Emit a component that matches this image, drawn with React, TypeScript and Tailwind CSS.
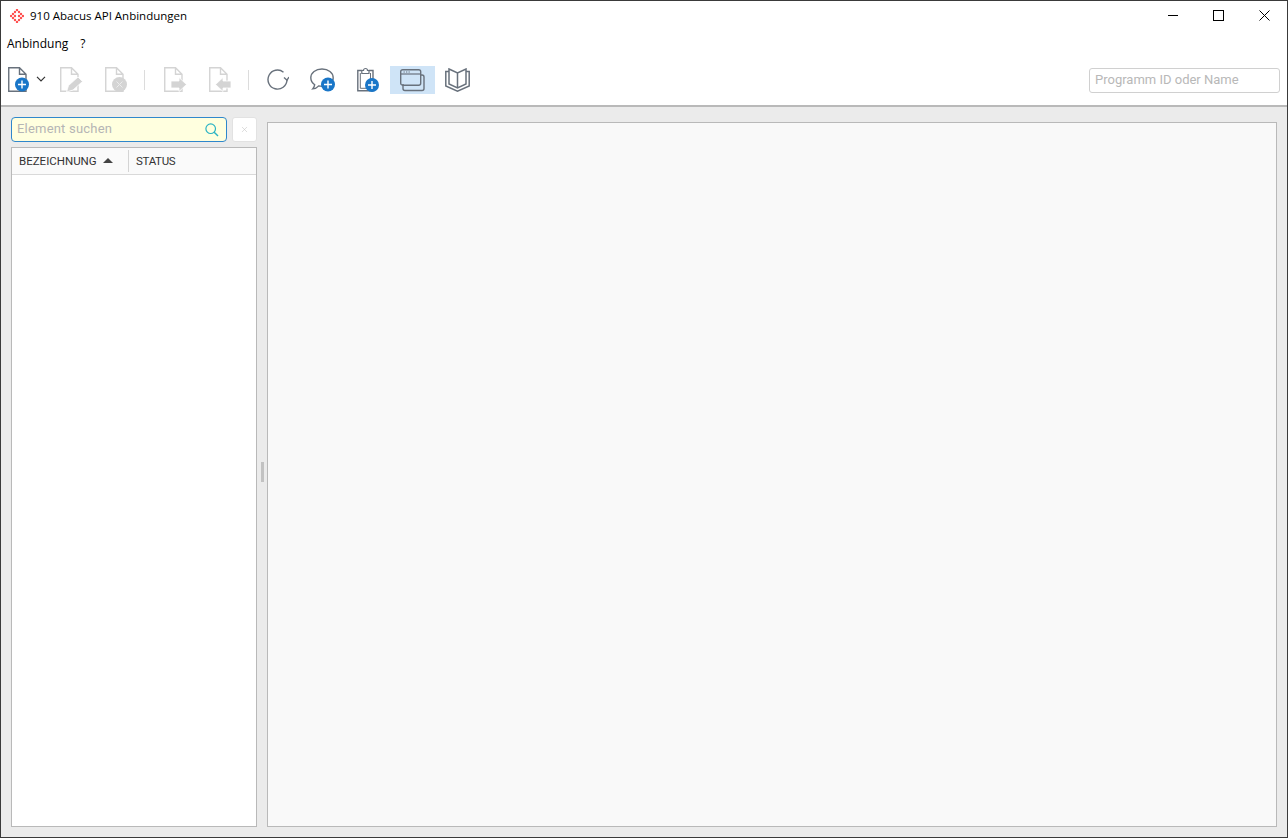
import { X } from 'lucide-react';

const BLUE = '#1976c8';
const SLATE = '#68717c';
const OFF = '#d4d4d4';

function PlusBadge({ cx, cy }: { cx: number; cy: number }) {
  return (
    <g>
      <circle cx={cx} cy={cy} r="7" fill={BLUE} />
      <path d={`M${cx - 4} ${cy}H${cx + 4}M${cx} ${cy - 4}V${cy + 4}`} stroke="#fff" strokeWidth="1.4" />
    </g>
  );
}

function Page({ color }: { color: string }) {
  return <path d="M.75.75H11.5L18 7.25V24.25H.75ZM11.5.75V7.25H18" fill="#fff" stroke={color} strokeWidth="1.4" />;
}

function NewIcon() {
  return (
    <svg width="22" height="26" viewBox="0 0 22 26" className="block">
      <Page color={SLATE} />
      <PlusBadge cx={14} cy={17.5} />
    </svg>
  );
}

function EditIcon() {
  return (
    <svg width="23" height="26" viewBox="0 0 23 26" className="block">
      <Page color={OFF} />
      <path d="M6.5 25 8.5 18.5 18 10 22.5 14.5 13 23Z" fill={OFF} stroke="#fff" strokeWidth=".8" />
    </svg>
  );
}

function DeleteIcon() {
  return (
    <svg width="23" height="26" viewBox="0 0 23 26" className="block">
      <Page color={OFF} />
      <circle cx="14.5" cy="17.5" r="7.5" fill={OFF} />
      <path d="M11.5 14.5 17.5 20.5M17.5 14.5 11.5 20.5" stroke="#ececec" strokeWidth="1" />
    </svg>
  );
}

function ExportIcon() {
  return (
    <svg width="23" height="26" viewBox="0 0 23 26" className="block">
      <Page color={OFF} />
      <path d="M7 14H15V10.5L22.5 17.5 15 24.5V21H7Z" fill={OFF} stroke="#fff" strokeWidth=".8" />
    </svg>
  );
}

function ImportIcon() {
  return (
    <svg width="23" height="26" viewBox="0 0 23 26" className="block">
      <Page color={OFF} />
      <path d="M22 14H14V10.5L6.5 17.5 14 24.5V21H22Z" fill={OFF} stroke="#fff" strokeWidth=".8" />
    </svg>
  );
}

function RefreshIcon() {
  return (
    <svg width="22" height="22" viewBox="0 0 22 22" className="block">
      <path d="M16.5 3.2A9.5 9.5 0 1 0 20 11" fill="none" stroke={SLATE} strokeWidth="1.4" />
      <path d="M17 8.5 20 11.2 22 8" fill="none" stroke={SLATE} strokeWidth="1.4" />
    </svg>
  );
}

function ChatIcon() {
  return (
    <svg width="26" height="24" viewBox="0 0 26 24" className="block">
      <path
        d="M12 1C5.7 1 .8 4.7.8 9.8c0 3 1.6 5.3 3.9 6.9-.2 1.6-1 3-2 4.2 2.6-.2 4.6-1.3 6-3 1 .2 2.1.3 3.3.3 6.3 0 11.2-3.6 11.2-8.3C23.2 4.7 18.3 1 12 1Z"
        fill="#fff"
        stroke={SLATE}
        strokeWidth="1.4"
      />
      <PlusBadge cx={18} cy={16.5} />
    </svg>
  );
}

function ClipboardIcon() {
  return (
    <svg width="23" height="26" viewBox="0 0 23 26" className="block">
      <path d="M5.5 3.5H.8V23.7H16V3.5H11.5" fill="#fff" stroke={SLATE} strokeWidth="1.4" />
      <path d="M3.3 6V21.3H13.5V6" fill="none" stroke={SLATE} strokeWidth="1" />
      <path d="M4.8 6.5V3.5H6.5A2 2 0 0 1 10.5 3.5H12V6.5Z" fill="#fff" stroke={SLATE} strokeWidth="1.2" />
      <PlusBadge cx={15} cy={18} />
    </svg>
  );
}

function WindowsIcon() {
  return (
    <svg width="26" height="23" viewBox="0 0 26 23" className="block">
      <path d="M3 15V19.5A2 2 0 0 0 5 21.5H22A2 2 0 0 0 24 19.5V8A2 2 0 0 0 22 6H20" fill="none" stroke={SLATE} strokeWidth="1.4" />
      <rect x=".7" y=".7" width="20" height="15.5" rx="2" fill="none" stroke={SLATE} strokeWidth="1.4" />
      <path d="M1 5H20.5" stroke={SLATE} strokeWidth="1.2" />
      <path d="M3.5 3H4.8M6 3H7.3M8.5 3H9.8" stroke={SLATE} strokeWidth="1.2" />
    </svg>
  );
}

function BookIcon() {
  return (
    <svg width="25" height="24" viewBox="0 0 25 24" className="block">
      <path d="M4 1 12.5 5 21 1V16L12.5 20 4 16ZM12.5 5V20" fill="none" stroke={SLATE} strokeWidth="1.5" />
      <path d="M4 3.5H.8V18L12.5 23.2 24.2 18V3.5H21" fill="none" stroke={SLATE} strokeWidth="1.5" />
    </svg>
  );
}

function SearchGlass() {
  return (
    <svg width="14" height="14" viewBox="0 0 14 14" className="block">
      <circle cx="5.7" cy="5.7" r="4.8" fill="none" stroke="#2bb3c4" strokeWidth="1.2" />
      <path d="M9.2 9.2 13 13" stroke="#2bb3c4" strokeWidth="1.4" />
    </svg>
  );
}

function Logo() {
  // rotated lattice of dots, open in the middle
  const dots = [
    [7, 1], [5, 3], [9, 3], [3, 5], [11, 5],
    [1, 7], [5, 7], [9, 7], [13, 7], [3, 9], [11, 9],
    [5, 11], [9, 11], [7, 13],
  ];
  return (
    <svg width="14" height="14" viewBox="0 0 14 14" className="block">
      {dots.map(([x, y]) => (
        <circle key={`${x}-${y}`} cx={x} cy={y} r="1.2" fill="#ff4d4d" />
      ))}
    </svg>
  );
}

function Divider() {
  return <div className="h-[20px] w-px bg-[#dcdcdc]" />;
}

export default function App() {
  return (
    <div className="flex h-[838px] w-[1288px] flex-col overflow-hidden border border-[#3a3a3a] bg-white font-['Roboto',sans-serif]">
      {/* title bar */}
      <div className="flex h-[29px] shrink-0 items-center pl-[9px] font-['Open_Sans','Noto_Sans',sans-serif] text-[11.5px] text-black">
        <Logo />
        <span className="ml-[6px]">910 Abacus API Anbindungen</span>
        <div className="ml-auto flex items-center pr-[17px]">
          <div className="h-px w-[10px] bg-black" />
          <div className="ml-[35px] h-[11px] w-[11px] border border-black" />
          <svg width="11" height="11" viewBox="0 0 11 11" className="ml-[35px] block">
            <path d="M.5.5 10.5 10.5M10.5.5.5 10.5" stroke="#000" strokeWidth="1" />
          </svg>
        </div>
      </div>

      {/* menu */}
      <div className="flex h-[27px] shrink-0 items-center pl-[6px] font-['Open_Sans','Noto_Sans',sans-serif] text-[12px] text-black">
        <span>Anbindung</span>
        <span className="ml-[12px]">?</span>
      </div>

      {/* toolbar */}
      <div className="flex h-[50px] shrink-0 items-center border-b-2 border-[#b9b9b9] pb-[2px] pl-[7px] pr-[7px]">
        <NewIcon />
        <svg width="10" height="6" viewBox="0 0 10 6" className="ml-[6px] mb-[2px]">
          <path d="M1 .8 5 4.8 9 .8" fill="none" stroke="#333" strokeWidth="1.2" />
        </svg>
        <div className="ml-[14px]"><EditIcon /></div>
        <div className="ml-[22px]"><DeleteIcon /></div>
        <div className="ml-[16px]"><Divider /></div>
        <div className="ml-[19px]"><ExportIcon /></div>
        <div className="ml-[22px]"><ImportIcon /></div>
        <div className="ml-[16px]"><Divider /></div>
        <div className="ml-[18px]"><RefreshIcon /></div>
        <div className="ml-[21px]"><ChatIcon /></div>
        <div className="ml-[21px]"><ClipboardIcon /></div>
        <div className="ml-[10px] flex h-[28px] w-[45px] items-center justify-center bg-[#cfe4f7]"><WindowsIcon /></div>
        <div className="ml-[10px]"><BookIcon /></div>
        <div className="ml-auto flex h-[25px] w-[191px] items-center rounded-[3px] border border-[#d0d0d0] pl-[5px] text-[13px] text-[#b8b8b8]">
          Programm ID oder Name
        </div>
      </div>

      {/* content */}
      <div className="flex min-h-0 flex-1 bg-[#ebebeb] pb-[10px] pl-[10px] pr-[10px]">
        <div className="flex w-[246px] shrink-0 flex-col pt-[10px]">
          <div className="flex h-[25px] shrink-0 items-center">
            <div className="flex h-[25px] w-[216px] items-center justify-between rounded-[4px] border border-[#2f87cc] bg-[#ffffdf] pl-[5px] pr-[7px] text-[13px] tracking-[0.2px] text-[#b5b5b5]">
              <span className="mb-[2px]">Element suchen</span>
              <SearchGlass />
            </div>
            <div className="ml-[5px] flex h-[25px] w-[25px] items-center justify-center rounded-[3px] border border-[#e2e2e2] bg-white">
              <X size={9} strokeWidth={1.5} className="text-[#c4c4c4]" />
            </div>
          </div>
          <div className="mt-[5px] flex min-h-0 flex-1 flex-col border border-[#b9b9b9] bg-white">
            <div className="flex h-[27px] shrink-0 items-center border-b border-[#d9d9d9] bg-[#fafafa] text-[11.5px] text-[#333]">
              <div className="flex h-[22px] w-[117px] items-center border-r border-[#d4d4d4] pl-[7px]">
                <span className="mt-[2px]">BEZEICHNUNG</span>
                <span className="ml-[6px] mb-[2px] h-0 w-0 border-x-[5px] border-b-[5px] border-x-transparent border-b-[#444]" />
              </div>
              <span className="mt-[2px] pl-[7px] tracking-[-0.3px]">STATUS</span>
            </div>
          </div>
        </div>

        {/* splitter */}
        <div className="flex w-[10px] shrink-0 items-center justify-center">
          <div className="mt-[10px] h-[20px] w-[3px] bg-[#c2c2c2]" />
        </div>

        <div className="mt-[15px] min-w-0 flex-1 border border-[#b9b9b9] bg-[#f9f9f9]" />
      </div>
    </div>
  );
}
